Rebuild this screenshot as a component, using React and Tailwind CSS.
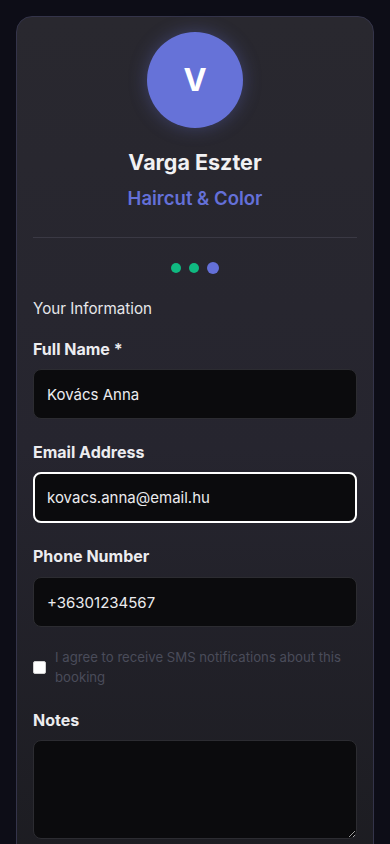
import React, { useState } from "react";

export default function App() {
  const [name, setName] = useState("Kovács Anna");
  const [email, setEmail] = useState("kovacs.anna@email.hu");
  const [phone, setPhone] = useState("+36301234567");
  const [sms, setSms] = useState(false);
  const [notes, setNotes] = useState("");

  return (
    <div
      className="min-h-screen bg-[#0d0d17] px-4 pt-4"
      style={{ fontFamily: "Inter, 'Noto Sans', sans-serif" }}
    >
      {/* Card */}
      <div className="rounded-2xl border border-[#34344a] bg-gradient-to-b from-[#29282f] via-[#26252f] to-[#1c1c21] px-4 pt-[15px] pb-10">
        {/* Stylist header */}
        <div className="flex flex-col items-center">
          <div className="flex h-24 w-24 items-center justify-center rounded-full bg-[#6672d8] shadow-[0_0_18px_rgba(102,114,216,0.35)]">
            <span className="text-[31px] font-bold text-white">V</span>
          </div>
          <h1 className="mt-5 text-[21.5px] leading-7 font-bold text-[#f1f1f3]">
            Varga Eszter
          </h1>
          <p className="mt-[10px] text-[18.5px] leading-6 font-semibold text-[#6470d8]">
            Haircut &amp; Color
          </p>
        </div>

        <div className="mt-[27px] h-px bg-[#3a3944]" />

        {/* Steps */}
        <div className="mt-6 flex items-center justify-center gap-2">
          <span className="h-[10px] w-[10px] rounded-full bg-[#10b981]" />
          <span className="h-[10px] w-[10px] rounded-full bg-[#10b981]" />
          <span className="h-3 w-3 rounded-full bg-[#6470d8]" />
        </div>

        <h2 className="mt-[25px] text-[15.2px] leading-5 text-[#e6e6ea]">
          Your Information
        </h2>

        <div className="mt-[18px] flex flex-col">
          <label className="mb-2 text-[16px] leading-6 font-bold text-[#ececef]">
            Full Name *
          </label>
          <input
            value={name}
            onChange={(e) => setName(e.target.value)}
            className="h-[50px] w-full rounded-lg border border-[#2c2c31] bg-[#0b0b0d] px-[13px] text-[15px] text-[#ececef] outline-none"
          />

          <label className="mt-[21px] mb-2 text-[16px] leading-6 font-bold text-[#ececef]">
            Email Address
          </label>
          <input
            value={email}
            onChange={(e) => setEmail(e.target.value)}
            className="h-[51px] w-full rounded-lg border-2 border-white bg-[#0b0b0d] px-[12px] text-[15px] text-[#ececef] outline-none"
          />

          <label className="mt-[21px] mb-[9px] text-[16px] leading-6 font-bold text-[#ececef]">
            Phone Number
          </label>
          <input
            value={phone}
            onChange={(e) => setPhone(e.target.value)}
            className="h-[50px] w-full rounded-lg border border-[#2c2c31] bg-[#0b0b0d] px-[13px] text-[15px] text-[#ececef] outline-none"
          />

          <label className="mt-5 flex items-center gap-[9px]">
            <input
              type="checkbox"
              checked={sms}
              onChange={(e) => setSms(e.target.checked)}
              className="h-[13px] w-[13px] shrink-0 appearance-none rounded-[2px] border border-[#d0d0d0] bg-white"
            />
            <span className="text-[13.2px] leading-5 text-[#4a4c5a]">
              I agree to receive SMS notifications about this booking
            </span>
          </label>

          <label className="mt-[21px] mb-2 text-[16px] leading-6 font-bold text-[#ececef]">
            Notes
          </label>
          <textarea
            value={notes}
            onChange={(e) => setNotes(e.target.value)}
            className="h-[99px] w-full rounded-lg border border-[#2c2c31] bg-[#0b0b0d] px-[13px] py-3 text-[15px] text-[#ececef] outline-none"
          />
        </div>
      </div>
    </div>
  );
}
